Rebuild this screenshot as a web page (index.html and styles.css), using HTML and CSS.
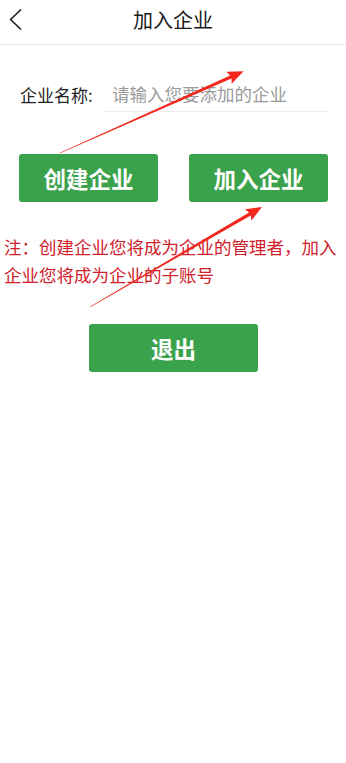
FILE: index.html
```html
<!DOCTYPE html>
<html lang="zh-CN">
<head>
<meta charset="utf-8">
<title>加入企业</title>
<link rel="stylesheet" href="styles.css">
</head>
<body>
<div class="page">
  <header class="header">
    <span class="back">
      <svg width="30" height="44" viewBox="0 0 30 44"><polyline points="20.5,10 10.5,19.5 20.5,29" fill="none" stroke="#222" stroke-width="1.7" stroke-linecap="round" stroke-linejoin="round"/></svg>
    </span>
    <h1 class="title">加入企业</h1>
    <span></span>
  </header>
  <div class="form-row">
    <label class="label">企业名称:</label>
    <div class="input">请输入您要添加的企业</div>
  </div>
  <div class="actions">
    <button class="btn">创建企业</button>
    <button class="btn">加入企业</button>
  </div>
  <p class="note">注：创建企业您将成为企业的管理者，加入企业您将成为企业的子账号</p>
  <button class="btn btn-exit">退出</button>
  <svg class="annotations" width="346" height="763" viewBox="0 0 346 763">
    <polygon transform="translate(60,153) rotate(-24)" points="0,-0.3 187,-1.7 185,-6.5 201,0 185,6.5 187,1.7 0,0.3" fill="#f2281f"/>
    <polygon transform="translate(90,307) rotate(-30.2)" points="0,-0.3 185,-1.7 183,-6.5 199,0 183,6.5 185,1.7 0,0.3" fill="#f2281f"/>
  </svg>
</div>
</body>
</html>
```
FILE: styles.css
```css
* { box-sizing: border-box; }
html, body { margin: 0; padding: 0; background: #fff; }
body {
  font-family: "Noto Sans CJK SC", "Noto Sans", sans-serif;
  color: #222;
}
.page { position: relative; width: 346px; min-height: 763px; }
.header {
  height: 45px;
  border-bottom: 1px solid #e6e6e6;
  display: grid;
  grid-template-columns: 44px 1fr 44px;
  align-items: center;
}
.back { display: flex; height: 44px; }
.title {
  margin: 0;
  font-size: 20px;
  font-weight: 400;
  text-align: center;
  line-height: 44px;
  margin-top: -5px;
  color: #1a1a1a;
}
.form-row {
  display: flex;
  align-items: center;
  margin-top: 31px;
  height: 36px;
}
.label {
  width: 105px;
  padding-left: 20px;
  font-size: 17px;
  color: #222;
}
.input {
  width: 224px;
  height: 36px;
  line-height: 35px;
  border-bottom: 1px solid #ececec;
  padding-left: 7px;
  font-size: 17.5px;
  color: #9a9a9a;
}
.actions {
  display: flex;
  gap: 31px;
  padding-left: 19px;
  margin-top: 42px;
}
.btn {
  width: 139px;
  height: 48px;
  border: none;
  border-radius: 3px;
  background: #3ba24c;
  color: #fff;
  font-family: "Noto Sans CJK SC", "Noto Sans", sans-serif;
  font-size: 22.5px;
  font-weight: 700;
  padding: 0;
}
.note {
  margin: 31px 0 0;
  padding-left: 4px;
  font-size: 17.5px;
  line-height: 28px;
  color: #d0202c;
}
.btn-exit {
  display: block;
  width: 169px;
  margin: 35px 0 0 89px;
}
.annotations {
  position: absolute;
  left: 0;
  top: 0;
  pointer-events: none;
}
```
